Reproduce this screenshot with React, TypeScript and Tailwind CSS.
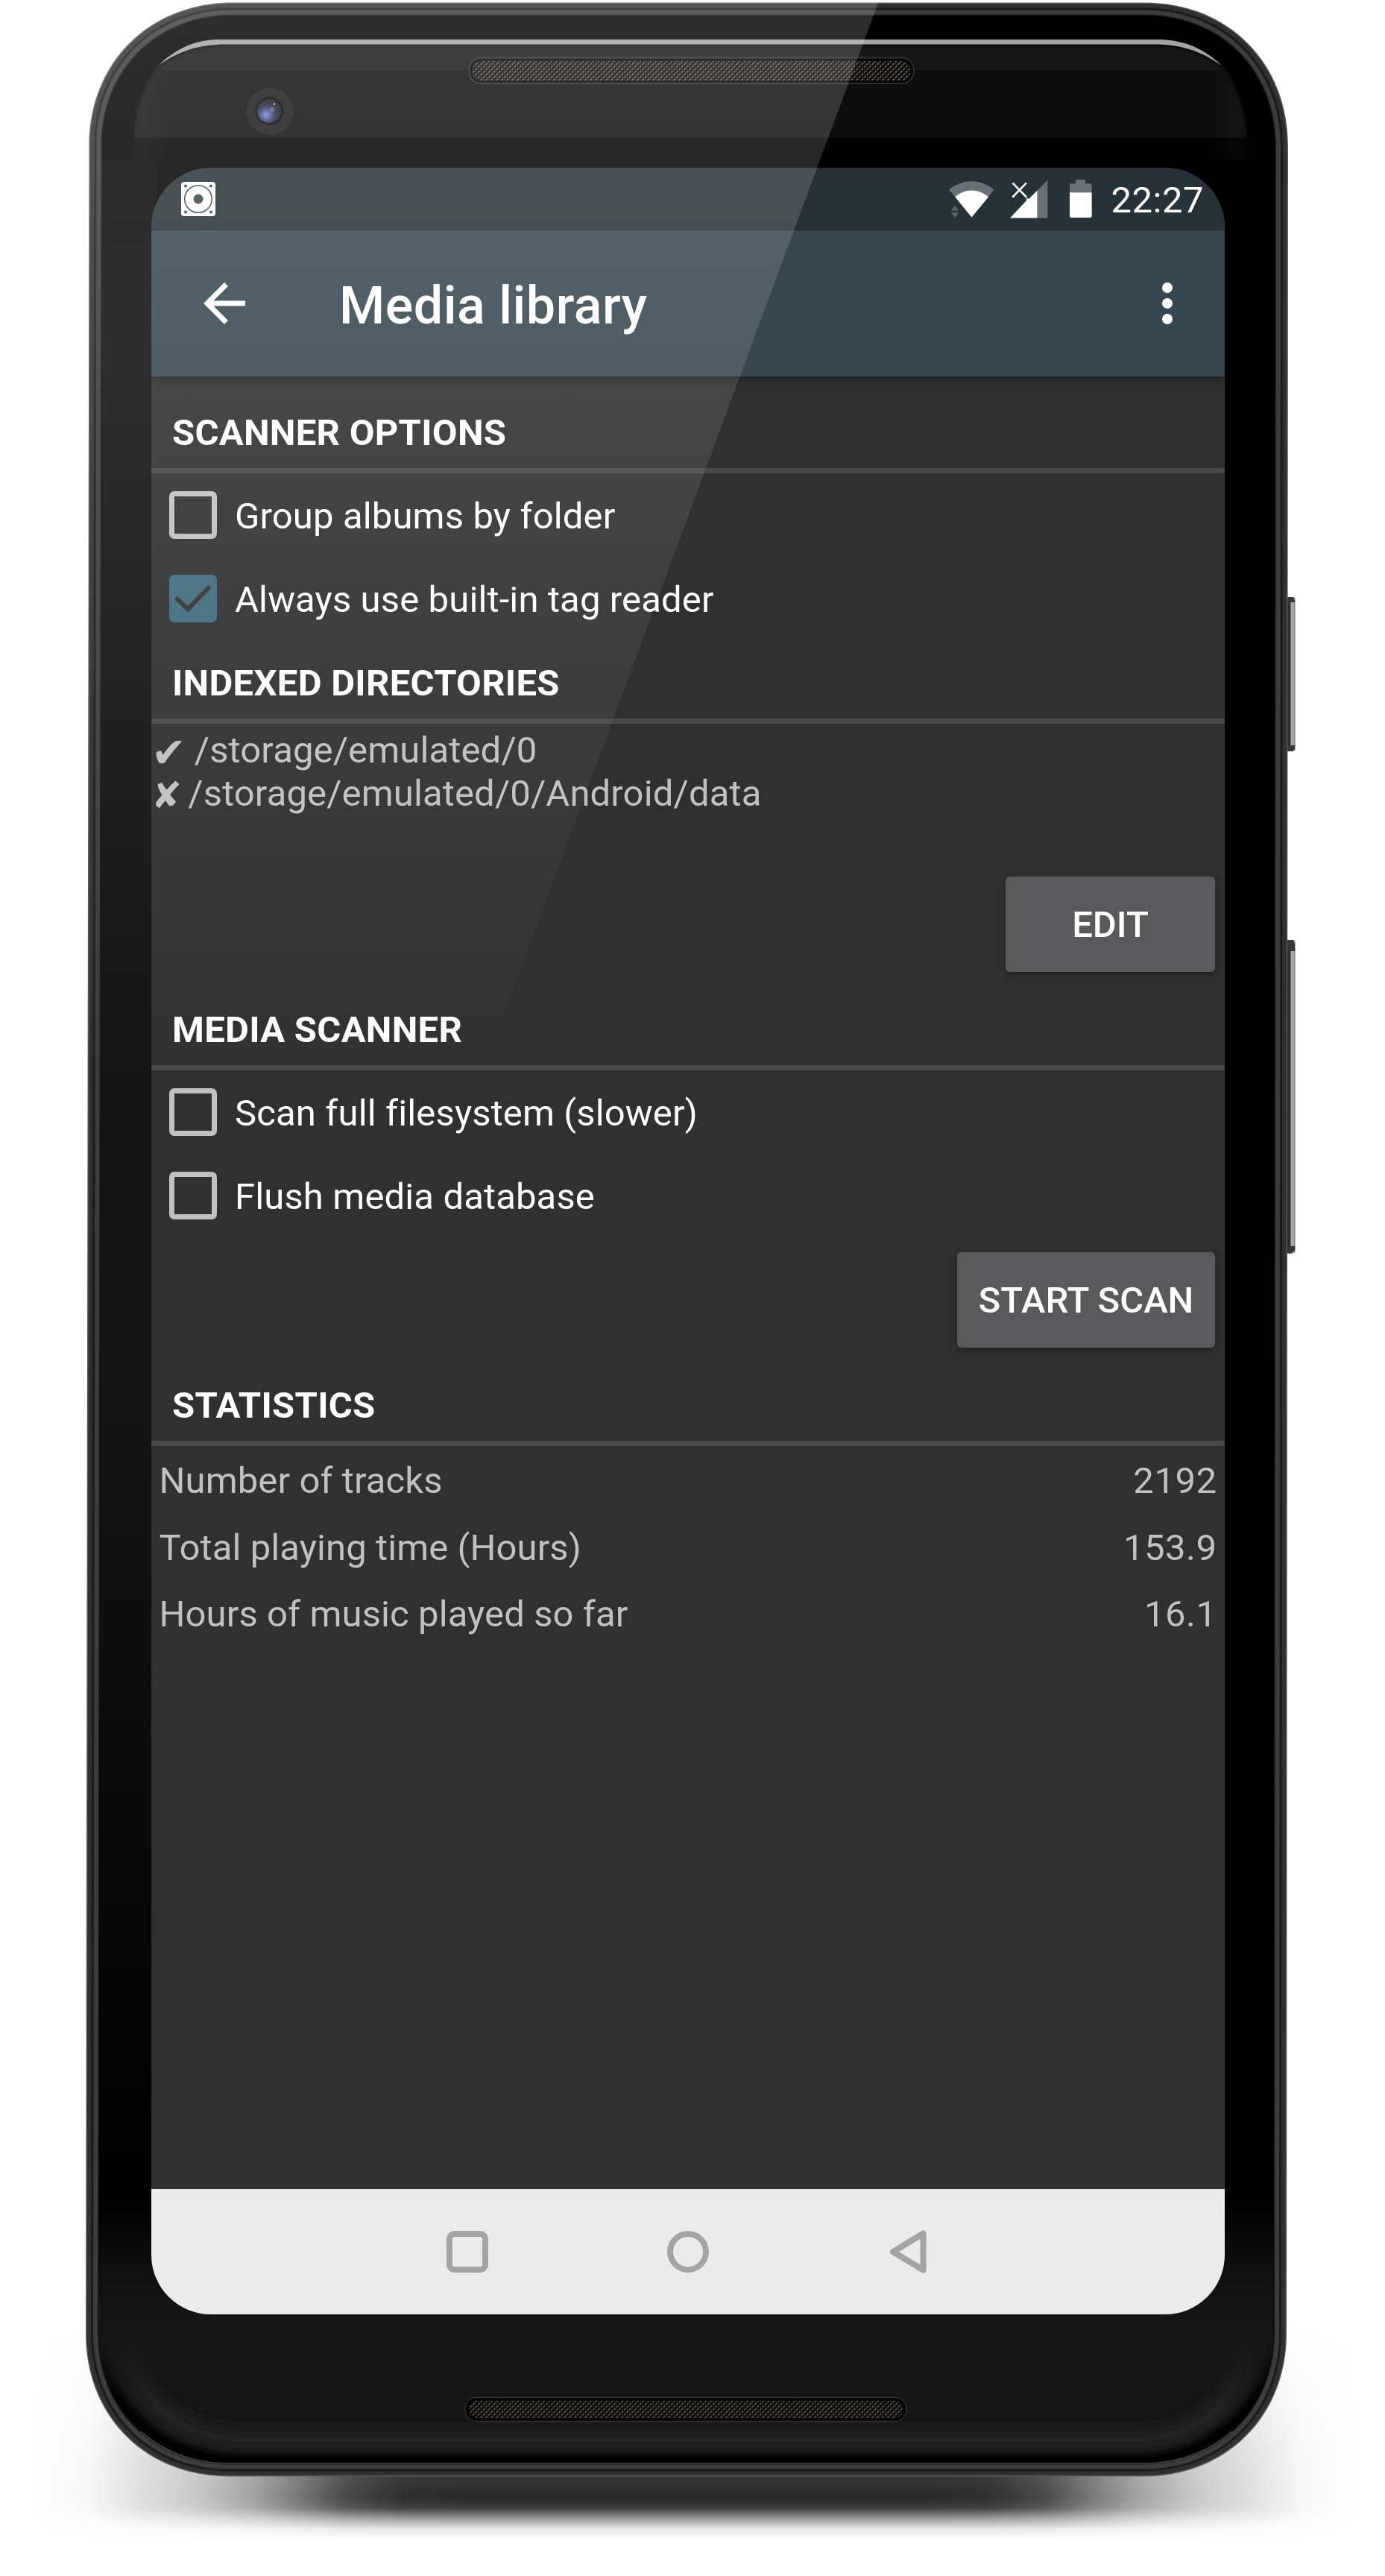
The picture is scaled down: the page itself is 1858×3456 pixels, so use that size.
import React from "react";

/* Outline of the handset, shrunk by d pixels on every side. */
function body(d: number) {
  const l = 119.5 + d;
  const lb = 115 + d;
  const r = 1728 - d;
  const rb = 1726 - d;
  const t = 3.5 + d;
  const b = 3322.5 - d;
  const R = 192 - d;
  const k = R * 0.42;
  return [
    `M${l + R} ${t}`,
    `H${r - R}`,
    `C${r - k} ${t} ${r} ${t + k} ${r} ${t + R}`,
    `L${rb} ${b - R}`,
    `C${rb} ${b - k} ${rb - k} ${b} ${rb - R} ${b}`,
    `H${lb + R}`,
    `C${lb + k} ${b} ${lb} ${b - k} ${lb} ${b - R}`,
    `L${l} ${t + R}`,
    `C${l} ${t + k} ${l + k} ${t} ${l + R} ${t}Z`,
  ].join(" ");
}

function Handset() {
  return (
    <svg className="absolute inset-0" width="1858" height="3456" viewBox="0 0 1858 3456" fill="none">
      <defs>
        <linearGradient id="shH" gradientUnits="userSpaceOnUse" x1="45" x2="1820" y1="0" y2="0">
          <stop offset="0" stopColor="#222" stopOpacity="0" />
          <stop offset="0.042" stopColor="#222" stopOpacity="0.04" />
          <stop offset="0.08" stopColor="#222" stopOpacity="0.15" />
          <stop offset="0.12" stopColor="#222" stopOpacity="0.25" />
          <stop offset="0.165" stopColor="#222" stopOpacity="0.43" />
          <stop offset="0.2" stopColor="#222" stopOpacity="0.63" />
          <stop offset="0.235" stopColor="#222" stopOpacity="0.85" />
          <stop offset="0.28" stopColor="#222" stopOpacity="0.98" />
          <stop offset="0.33" stopColor="#222" />
          <stop offset="0.67" stopColor="#222" />
          <stop offset="0.72" stopColor="#222" stopOpacity="0.98" />
          <stop offset="0.765" stopColor="#222" stopOpacity="0.85" />
          <stop offset="0.8" stopColor="#222" stopOpacity="0.63" />
          <stop offset="0.835" stopColor="#222" stopOpacity="0.43" />
          <stop offset="0.88" stopColor="#222" stopOpacity="0.25" />
          <stop offset="0.92" stopColor="#222" stopOpacity="0.15" />
          <stop offset="0.958" stopColor="#222" stopOpacity="0.04" />
          <stop offset="1" stopColor="#222" stopOpacity="0" />
        </linearGradient>
        <linearGradient id="shV" gradientUnits="userSpaceOnUse" x1="0" x2="0" y1="3120" y2="3408">
          <stop offset="0" stopColor="#fff" stopOpacity="0" />
          <stop offset="0.3" stopColor="#fff" stopOpacity="0.45" />
          <stop offset="0.6" stopColor="#fff" stopOpacity="0.85" />
          <stop offset="0.7" stopColor="#fff" stopOpacity="0.91" />
          <stop offset="0.8" stopColor="#fff" stopOpacity="0.97" />
          <stop offset="0.85" stopColor="#fff" stopOpacity="0.88" />
          <stop offset="0.9" stopColor="#fff" stopOpacity="0.45" />
          <stop offset="0.95" stopColor="#fff" stopOpacity="0.1" />
          <stop offset="1" stopColor="#fff" stopOpacity="0" />
        </linearGradient>
        <mask id="shM" maskUnits="userSpaceOnUse" x="0" y="3100" width="1858" height="356">
          <rect y="3120" width="1858" height="288" fill="url(#shV)" />
        </mask>
        <linearGradient id="leftFade" gradientUnits="userSpaceOnUse" x1="0" x2="0" y1="215" y2="2950">
          <stop offset="0" stopColor="#050505" />
          <stop offset="0.1" stopColor="#131313" />
          <stop offset="0.6" stopColor="#141414" />
          <stop offset="1" stopColor="#000" />
        </linearGradient>
        <linearGradient id="topPanel" gradientUnits="userSpaceOnUse" x1="0" x2="0" y1="58" y2="216">
          <stop offset="0" stopColor="#161616" />
          <stop offset="1" stopColor="#030303" />
        </linearGradient>
        <linearGradient id="sideGlow" gradientUnits="userSpaceOnUse" x1="170" x2="1680" y1="0" y2="0">
          <stop offset="0" stopColor="#fff" stopOpacity="0.01" />
          <stop offset="0.012" stopColor="#fff" stopOpacity="0.03" />
          <stop offset="0.04" stopColor="#fff" stopOpacity="0" />
          <stop offset="0.96" stopColor="#fff" stopOpacity="0" />
          <stop offset="0.988" stopColor="#fff" stopOpacity="0.03" />
          <stop offset="1" stopColor="#fff" stopOpacity="0.01" />
        </linearGradient>
        <linearGradient id="chin" gradientUnits="userSpaceOnUse" x1="0" x2="0" y1="2950" y2="3308">
          <stop offset="0" stopColor="#000" />
          <stop offset="0.3" stopColor="#111" />
          <stop offset="0.52" stopColor="#161616" />
          <stop offset="1" stopColor="#161616" />
        </linearGradient>
        <linearGradient id="rise" gradientUnits="userSpaceOnUse" x1="0" x2="0" y1="3134" y2="3230">
          <stop offset="0" stopColor="#fff" stopOpacity="0" />
          <stop offset="1" stopColor="#fff" />
        </linearGradient>
        <mask id="riseM" maskUnits="userSpaceOnUse" x="100" y="3100" width="1650" height="240">
          <rect x="100" y="3100" width="1650" height="240" fill="url(#rise)" />
        </mask>
        <linearGradient id="btn" x1="0" x2="1" y1="0" y2="0">
          <stop offset="0" stopColor="#191718" />
          <stop offset="0.45" stopColor="#3a3537" />
          <stop offset="0.6" stopColor="#b3a9a9" />
          <stop offset="0.9" stopColor="#aaa1a1" />
          <stop offset="1" stopColor="#555" />
        </linearGradient>
        <radialGradient id="lens" cx="0.38" cy="0.66" r="0.62">
          <stop offset="0" stopColor="#7c8ad8" />
          <stop offset="0.3" stopColor="#4a589c" />
          <stop offset="0.6" stopColor="#262a44" />
          <stop offset="1" stopColor="#1c1d22" />
        </radialGradient>
        <pattern id="mesh" width="7" height="7" patternUnits="userSpaceOnUse">
          <rect width="7" height="7" fill="#0b0a09" />
          <path d="M0.500 3L3 0.500M4 6.500L6.500 4" stroke="#7d7468" strokeWidth="1.300" />
          <path d="M4 1L6 3M0.500 4.500L2.500 6.500" stroke="#38332e" strokeWidth="1" />
        </pattern>
        <filter id="soft" x="-10%" y="-30%" width="120%" height="160%">
          <feGaussianBlur stdDeviation="9" />
        </filter>
        <filter id="haze" x="-10%" y="-30%" width="120%" height="160%">
          <feGaussianBlur stdDeviation="4" />
        </filter>
        <clipPath id="glass">
          <path d={body(17.5)} />
        </clipPath>
        <clipPath id="topZone">
          <rect x="130" y="0" width="1590" height="215" />
        </clipPath>
        <clipPath id="lipZone">
          <rect x="130" y="3262" width="1590" height="60" />
        </clipPath>
      </defs>

      {/* ground shadow */}
      <rect x="45" y="3120" width="1775" height="290" fill="url(#shH)" mask="url(#shM)" />

      {/* power and volume keys */}
      <rect x="1725" y="801" width="12.500" height="207" rx="3" fill="url(#btn)" />
      <rect x="1725" y="1261" width="12.500" height="420.500" rx="3" fill="url(#btn)" />
      <path
        d="M1727 801H1735L1737 806V808H1727ZM1727 1000H1737V1005L1734 1008H1727ZM1727 1261H1735L1737 1266V1276H1727ZM1727 1672H1737V1677L1733 1681.500H1727Z"
        fill="#3a3637"
      />

      {/* metal rim */}
      <path d={body(0)} fill="#585858" />
      <path d={body(1.5)} fill="#303030" />
      <path d={body(7)} fill="#1b1b1b" />
      <path d={body(10)} fill="#3c3c3c" />
      <path d={body(16)} fill="#161616" />

      {/* front glass */}
      <g clipPath="url(#glass)">
        <rect x="100" width="1650" height="3340" fill="#000" />
        <rect x="100" y="215" width="110" height="2740" fill="url(#leftFade)" />
        <rect x="100" y="2950" width="1650" height="370" fill="url(#chin)" />
        <g mask="url(#riseM)">
          <path
            d="M168 3080V3120C174 3216 236 3269 320 3273H1530C1614 3269 1672 3216 1678 3120V3080"
            stroke="#242424"
            strokeWidth="28"
            filter="url(#soft)"
          />
          <path
            d="M128 3120C134 3232 218 3300 320 3301H1530C1622 3300 1708 3232 1714 3120"
            stroke="#000"
            strokeWidth="16"
            filter="url(#haze)"
          />
        </g>
        <g clipPath="url(#topZone)">
          <path
            filter="url(#haze)"
            d="M174 240C176 170 188 112 214 88C240 68 268 60 300 60H1550C1582 60 1612 68 1638 88C1664 112 1676 170 1678 240Z"
            fill="url(#topPanel)"
          />
          <path
            filter="url(#haze)"
            d="M174 240C176 170 188 112 214 88C240 68 268 60 300 60H1550C1582 60 1612 68 1638 88C1664 112 1676 170 1678 240Z"
            fill="url(#sideGlow)"
          />
        </g>
      </g>
      <path d={body(17.5)} stroke="#454545" strokeWidth="1.600" clipPath="url(#lipZone)" />

      {/* edge highlight */}
      <path
        d="M212 88C240 62 266 53 294 53H1552C1584 53 1612 62 1639 88C1610 68 1584 59.500 1548 59.500H304C268 59.500 240 68 212 88Z"
        fill="#a3a3a3"
      />

      {/* earpiece */}
      <rect x="629.500" y="77.500" width="596" height="34.500" rx="15" fill="#020202" stroke="#303030" strokeWidth="1.800" />
      <rect x="634" y="82" width="587" height="26" rx="12" fill="url(#mesh)" />

      {/* front camera */}
      <circle cx="362" cy="149.500" r="31.500" fill="#1c1919" />
      <circle cx="361.500" cy="149" r="19" fill="#050505" />
      <circle cx="361" cy="149" r="16" fill="url(#lens)" />
      <circle cx="365" cy="147" r="3.500" fill="#6a7d8a" opacity="0.6" />
      <circle cx="368" cy="139.500" r="1.300" fill="#e0a8c0" />

      {/* bottom speaker */}
      <rect x="624" y="3216.500" width="592" height="32" rx="15" fill="#030303" stroke="#33332f" strokeWidth="1.300" />
      <rect x="629" y="3221" width="582" height="23" rx="11" fill="url(#mesh)" opacity="0.85" />
    </svg>
  );
}

/* Diagonal light reflection across the glass. */
function Reflection() {
  return (
    <svg className="pointer-events-none absolute inset-0" width="1858" height="3456" viewBox="0 0 1858 3456" fill="none">
      <defs>
        <linearGradient id="glare" gradientUnits="userSpaceOnUse" x1="0" x2="0" y1="0" y2="1480">
          <stop offset="0" stopColor="#fff" stopOpacity="0.18" />
          <stop offset="0.1" stopColor="#fff" stopOpacity="0.165" />
          <stop offset="0.2" stopColor="#fff" stopOpacity="0.145" />
          <stop offset="0.34" stopColor="#fff" stopOpacity="0.112" />
          <stop offset="0.58" stopColor="#fff" stopOpacity="0.07" />
          <stop offset="0.75" stopColor="#fff" stopOpacity="0.04" />
          <stop offset="1" stopColor="#fff" stopOpacity="0" />
        </linearGradient>
        <clipPath id="outer">
          <path d={body(0)} />
        </clipPath>
      </defs>
      <path clipPath="url(#outer)" d="M100 0H1179.500L992.500 505L632 1480H100Z" fill="url(#glare)" />
    </svg>
  );
}

function StatusBar() {
  return (
    <div className="flex h-[84px] shrink-0 items-center justify-between bg-[#273238] pl-10 pr-[28px] text-white">
      <svg className="size-[46px]" viewBox="0 0 46 46">
        <rect width="46" height="46" rx="4" fill="#fff" />
        <circle cx="23" cy="23" r="18.300" fill="none" stroke="#3c474d" strokeWidth="1.600" />
        <circle cx="23" cy="23" r="6.500" fill="#3c474d" />
        <g fill="#3c474d">
          <circle cx="6" cy="5.500" r="2" />
          <circle cx="40" cy="5.500" r="2" />
          <circle cx="6" cy="40.500" r="2" />
          <circle cx="40" cy="40.500" r="2" />
        </g>
      </svg>
      <div className="flex items-center">
        <svg className="h-[56px] w-[196px]" viewBox="1271 239 196 56">
          <path d="M1303.500 291.500L1273.300 254.500C1291 239.500 1316 239.500 1333.500 254.500Z" fill="#687175" />
          <path d="M1303.500 291.500L1281.300 264.300C1294 252.500 1313 252.500 1326 264.300Z" fill="#fff" />
          <path d="M1281 275.800L1286.200 282.400H1275.800ZM1281 291.700L1286.200 285.300H1275.800Z" fill="#5a646a" />
          <path d="M1391.500 255.500L1405.300 241.800V292.500H1391.500Z" fill="#687175" />
          <path d="M1355 292.500L1377 269V265L1380 267L1391.500 255.500V292.500Z" fill="#fff" />
          <path d="M1358.300 245.300L1377 264.500M1377 245.300L1358.300 264.500" stroke="#fff" strokeWidth="2.600" />
          <path d="M1435 258.300V249Q1435 246.300 1437.500 246.300H1443V241H1456V246.300H1462Q1464.700 246.300 1464.700 249V258.300Z" fill="#687175" />
          <path d="M1435 258.300H1464.700V289.500Q1464.700 292 1462 292H1437.500Q1435 292 1435 289.500Z" fill="#fff" />
        </svg>
        <span className="ml-[23px] translate-y-px text-[49px] leading-[57px] tracking-[0.5px]">22:27</span>
      </div>
    </div>
  );
}

function AppBar() {
  return (
    <header className="relative flex h-[196px] shrink-0 items-center bg-[#37474f] pl-14 pr-[35px] text-white shadow-[0_4px_12px_rgba(0,0,0,0.35)]">
      <svg className="size-[84px]" viewBox="0 0 24 24" fill="#fff">
        <path d="M20 11H7.830l5.590-5.590L12 4l-8 8 8 8 1.410-1.410L7.830 13H20v-2z" />
      </svg>
      <h1 className="ml-28 flex-1 pt-[5px] text-[70px] leading-[82px] font-medium tracking-[0.5px]">Media library</h1>
      <svg className="size-[84px]" viewBox="0 0 24 24" fill="#fff">
        <circle cx="12" cy="6" r="2" />
        <circle cx="12" cy="12" r="2" />
        <circle cx="12" cy="18" r="2" />
      </svg>
    </header>
  );
}

function SectionTitle({ children }: { children: React.ReactNode }) {
  return (
    <h2 className="flex h-[112px] items-end border-b-[7px] border-[#484848] pb-[19px] pl-7 text-[49px] leading-[57px] font-bold tracking-[0.28px] text-white">
      {children}
    </h2>
  );
}

function CheckRow({ label, checked = false }: { label: string; checked?: boolean }) {
  return (
    <label className="flex h-[112px] items-center pl-6 text-[49px] leading-[57px] tracking-[0.14px] text-white">
      {checked ? (
        <svg className="size-[64px]" viewBox="0 0 64 64">
          <rect width="64" height="64" rx="7" fill="#3f6b7d" />
          <path d="M9 31L25 46L54.500 16" fill="none" stroke="#323232" strokeWidth="6" />
        </svg>
      ) : (
        <span className="size-[64px] rounded-[7px] border-[7px] border-[#c1c1c1]" />
      )}
      <span className="ml-6 pt-[2px]">{label}</span>
    </label>
  );
}

function ActionButton({ label, width }: { label: string; width: string }) {
  return (
    <div className="flex h-[168px] items-center justify-end pr-[13px]">
      <button
        className={`${width} h-32 rounded-[6px] bg-[#5a5a5c] pt-px text-center text-[49px] leading-[57px] font-medium text-white shadow-[0_4px_8px_rgba(0,0,0,0.3)]`}
      >
        {label}
      </button>
    </div>
  );
}

const directories = [
  { mark: "✔", style: "w-[45.500px] text-[56px]", path: "/storage/emulated/0" },
  { mark: "✘", style: "w-[37px] text-[49px]", path: "/storage/emulated/0/Android/data" },
];

const stats = [
  ["Number of tracks", "2192"],
  ["Total playing time (Hours)", "153.9"],
  ["Hours of music played so far", "16.1"],
];

function NavBar() {
  return (
    <nav className="flex h-[168px] shrink-0 items-center justify-center gap-[232px] bg-[#ebebeb]">
      <svg className="size-16" viewBox="0 0 64 64" fill="none" stroke="#a4a4a4" strokeWidth="8">
        <rect x="8" y="8" width="48" height="48" rx="7" />
      </svg>
      <svg className="size-16" viewBox="0 0 64 64" fill="none" stroke="#a4a4a4" strokeWidth="8">
        <circle cx="32" cy="32" r="24" />
      </svg>
      <svg className="size-16" viewBox="0 0 64 64" fill="none" stroke="#a4a4a4" strokeWidth="8" strokeLinejoin="round">
        <path d="M51.500 7.500V56.500L11 32Z" />
      </svg>
    </nav>
  );
}

export default function App() {
  return (
    <div className="relative h-[3456px] w-[1858px] overflow-hidden bg-white pt-[225px] pl-[203px] font-['Roboto',sans-serif]">
      <Handset />
      <main className="relative flex h-[2880px] w-[1440px] flex-col overflow-hidden rounded-[80px] bg-[#303030]">
        <StatusBar />
        <AppBar />
        <div className="flex flex-1 flex-col pt-[18px]">
          <SectionTitle>SCANNER OPTIONS</SectionTitle>
          <CheckRow label="Group albums by folder" />
          <CheckRow label="Always use built-in tag reader" checked />

          <SectionTitle>INDEXED DIRECTORIES</SectionTitle>
          <div className="h-[185px] pt-[7px] text-[49px] leading-[57.500px] tracking-[0.14px] text-[#c1c1c1]">
            {directories.map((d) => (
              <div key={d.path} className="flex h-[57.500px] whitespace-pre">
                <span className={`${d.style} translate-y-[3px] font-['DejaVu_Sans',sans-serif] font-bold`}>{d.mark}</span>
                <span> {d.path}</span>
              </div>
            ))}
          </div>
          <ActionButton label="EDIT" width="w-[281px]" />

          <SectionTitle>MEDIA SCANNER</SectionTitle>
          <CheckRow label="Scan full filesystem (slower)" />
          <CheckRow label="Flush media database" />
          <ActionButton label="START SCAN" width="w-[346px]" />

          <SectionTitle>STATISTICS</SectionTitle>
          <div className="flex flex-col pt-[2px]">
            {stats.map(([name, value]) => (
              <div
                key={name}
                className="flex h-[89.500px] items-center justify-between px-[10.500px] text-[49px] leading-[57px] text-[#c1c1c1]"
              >
                <span className="tracking-[0.1px]">{name}</span>
                <span className="tracking-[0.5px]">{value}</span>
              </div>
            ))}
          </div>
        </div>
        <NavBar />
      </main>
      <Reflection />
    </div>
  );
}
